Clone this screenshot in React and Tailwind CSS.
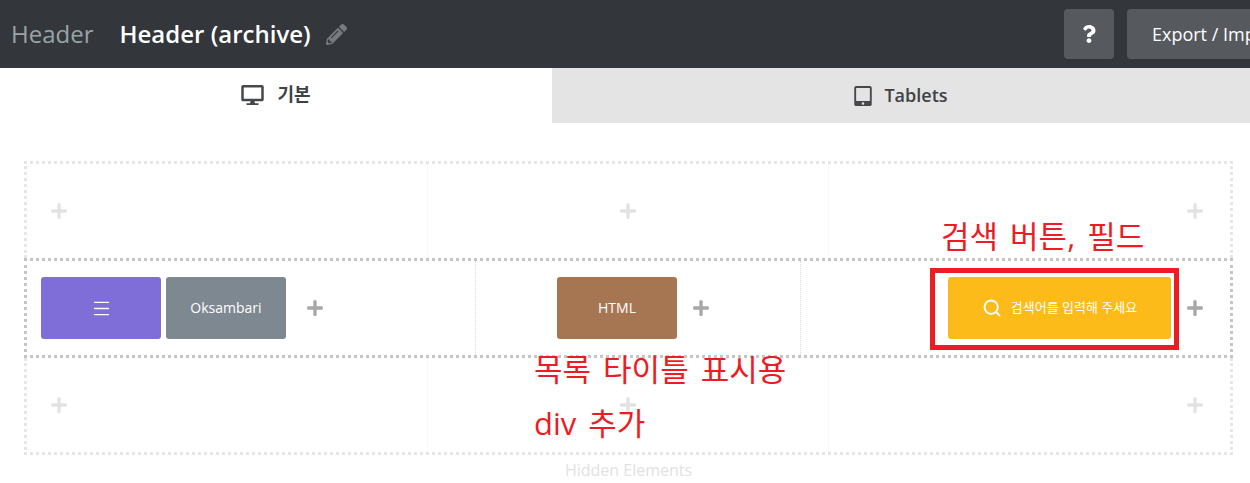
import React from 'react';
import { FaDesktop, FaTabletAlt, FaPencilAlt, FaQuestion, FaPlus } from 'react-icons/fa';
import { Menu, Search } from 'lucide-react';

const fontStack = "font-['Open_Sans','Noto_Sans_CJK_KR',sans-serif]";

function AddIcon({ light }) {
  return <FaPlus className={light ? 'h-[18px] w-[18px] text-[#e3e3e3]' : 'h-[18px] w-[18px] text-[#a8a8a8]'} />;
}

function Block({ className, children }) {
  return (
    <div className={`flex h-[62px] w-[120px] items-center justify-center rounded-[3px] text-sm text-white ${className}`}>
      {children}
    </div>
  );
}

function GhostRow({ className }) {
  return (
    <div className={`grid h-[97px] grid-cols-3 border-[3px] border-dotted border-[#e6e6e6] ${className}`}>
      <div className="flex items-center border-r border-dotted border-[#f0f0f0] pl-[23px]">
        <AddIcon light />
      </div>
      <div className="flex items-center justify-center border-r border-dotted border-[#f0f0f0]">
        <AddIcon light />
      </div>
      <div className="flex items-center justify-end pr-[26px]">
        <AddIcon light />
      </div>
    </div>
  );
}

export default function App() {
  return (
    <div className={`relative h-[483px] w-[1250px] overflow-hidden bg-white ${fontStack}`}>
      <header className="flex h-[68px] items-center overflow-hidden bg-[#33373b]">
        <div className="flex w-[1064px] shrink-0 items-center pl-[11px] text-[24px]">
          <span className="text-[#9aa3a9]">Header</span>
          <span className="ml-[26px] font-semibold text-white">Header (archive)</span>
          <FaPencilAlt className="ml-[15px] h-[21px] w-[21px] text-[#777b7f]" />
        </div>
        <button className="flex h-[50px] w-[50px] shrink-0 items-center justify-center rounded-[4px] bg-[#56595e] text-white">
          <FaQuestion className="h-[18px] w-[18px]" />
        </button>
        <button className="ml-[13px] h-[50px] shrink-0 whitespace-nowrap rounded-[4px] bg-[#56595e] px-[25px] text-[18px] text-white">
          Export / Import
        </button>
      </header>

      <nav className="flex h-[55px] text-[18px] font-semibold text-[#3f4245]">
        <div className="flex w-[552px] items-center justify-center gap-[13px] bg-white pb-[2px]">
          <FaDesktop className="h-[20px] w-[23px] text-[#46484b]" />
          <span>기본</span>
        </div>
        <div className="flex flex-1 items-center justify-center gap-[12px] bg-[#e4e4e4]">
          <FaTabletAlt className="h-[20px] w-[18px] text-[#46484b]" />
          <span>Tablets</span>
        </div>
      </nav>

      <main className="mx-[24px] mt-[38px] w-[1209px]">
        <GhostRow className="border-b-0" />

        <div className="grid h-[100px] grid-cols-[449px_325px_1fr] border-[3px] border-dotted border-[#c6c6c6]">
          <div className="flex items-center gap-[5px] border-r border-dotted border-[#dcdcdc] pl-[14px]">
            <Block className="bg-[#7f6dd8]">
              <Menu className="h-[21px] w-[21px]" strokeWidth={1.5} />
            </Block>
            <Block className="bg-[#7e8891]">Oksambari</Block>
            <span className="ml-[15px]"><AddIcon /></span>
          </div>
          <div className="flex items-center border-r border-dotted border-[#dcdcdc] pl-[81px]">
            <Block className="bg-[#a67653]">HTML</Block>
            <span className="ml-[15px]"><AddIcon /></span>
          </div>
          <div className="flex items-center justify-end pr-[26px]">
            <div className="flex h-[62px] w-[223px] items-center justify-center gap-[9px] rounded-[3px] bg-[#fdbb1a] text-[13px] text-white">
              <Search className="h-[20px] w-[20px]" strokeWidth={2.25} />
              <span>검색어를 입력해 주세요</span>
            </div>
            <span className="ml-[15px]"><AddIcon /></span>
          </div>
        </div>

        <GhostRow className="border-t-0" />

        <p className="mt-[3px] text-center text-[16px] text-[#e2e2e2]">Hidden Elements</p>
      </main>

      {/* red notes drawn over the screenshot */}
      <div className="absolute left-[930px] top-[268px] h-[82px] w-[249px] border-[5px] border-[#ed1c24]" />
      <span className="absolute left-[941px] top-[213px] whitespace-nowrap text-[31px] text-[#ed1c24] [word-spacing:4px]">검색 버튼, 필드</span>
      <span className="absolute left-[534px] top-[346px] whitespace-nowrap text-[31px] text-[#ed1c24] [word-spacing:4px]">목록 타이틀 표시용</span>
      <span className="absolute left-[534px] top-[400px] whitespace-nowrap text-[31px] text-[#ed1c24] [word-spacing:4px]">div 추가</span>
    </div>
  );
}
